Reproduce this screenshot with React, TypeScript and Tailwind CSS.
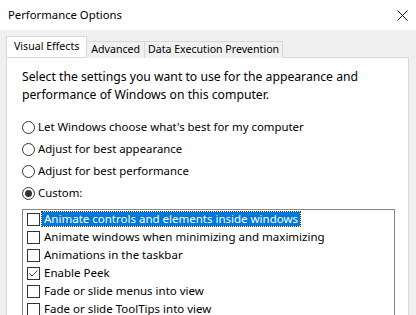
import { useState } from 'react';

const radios = [
  "Let Windows choose what's best for my computer",
  'Adjust for best appearance',
  'Adjust for best performance',
  'Custom:',
];

const effects = [
  { label: 'Animate controls and elements inside windows', checked: false },
  { label: 'Animate windows when minimizing and maximizing', checked: false },
  { label: 'Animations in the taskbar', checked: false },
  { label: 'Enable Peek', checked: true },
  { label: 'Fade or slide menus into view', checked: false },
  { label: 'Fade or slide ToolTips into view', checked: false },
];

function Radio({ on }: { on: boolean }) {
  return (
    <span className="w-[13px] h-[13px] rounded-full border border-[#333] bg-white flex items-center justify-center shrink-0">
      {on && <span className="w-[7px] h-[7px] rounded-full bg-[#333]" />}
    </span>
  );
}

function Checkbox({ checked }: { checked: boolean }) {
  return (
    <span className="w-[13px] h-[13px] border border-[#333] bg-white flex items-center justify-center shrink-0">
      {checked && (
        <svg width="11" height="11" viewBox="0 0 11 11" fill="none">
          <path d="M1.5 5.5 L4 8 L9.5 2.5" stroke="#444" strokeWidth="1" />
        </svg>
      )}
    </span>
  );
}

export default function App() {
  const [choice] = useState(3);
  const [selected] = useState(0);

  return (
    <div className="w-[416px] h-[315px] overflow-hidden flex flex-col bg-[#f0f0f0] text-[12px] text-black font-['Noto_Sans',sans-serif]">
      <div className="h-[30px] bg-white flex items-center justify-between pl-[8px] pr-[8px] shrink-0">
        <span className="text-[11.3px]">Performance Options</span>
        <svg width="11" height="11" viewBox="0 0 11 11" fill="none">
          <path d="M0.5 0.5 L10.5 10.5 M10.5 0.5 L0.5 10.5" stroke="#111" strokeWidth="1" />
        </svg>
      </div>

      <div className="flex-1 pt-[7px] pl-[6px] pr-[7px]">
        <div className="flex items-end h-[20px] relative z-10 text-[10.6px]">
          <div className="h-[21px] bg-white border border-b-0 border-[#d9d9d9] px-[7px] flex items-center">
            Visual Effects
          </div>
          <div className="h-[17px] -mb-px bg-[#f0f0f0] border border-l-0 border-b-0 border-[#d9d9d9] px-[4px] flex items-center">
            Advanced
          </div>
          <div className="h-[17px] -mb-px bg-[#f0f0f0] border border-l-0 border-b-0 border-[#d9d9d9] px-[3px] flex items-center">
            Data Execution Prevention
          </div>
        </div>

        <div className="bg-white border border-[#d9d9d9] h-[300px] pt-[10px] pl-[15px] pr-[13px]">
          <p className="leading-[18px] text-[12.2px]">
            Select the settings you want to use for the appearance and
            <br />
            performance of Windows on this computer.
          </p>

          <div className="mt-[12px] flex flex-col text-[11.4px]">
            {radios.map((r, i) => (
              <div key={r} className="h-[22px] flex items-center gap-[3px]">
                <Radio on={i === choice} />
                <span>{r}</span>
              </div>
            ))}
          </div>

          <div className="mt-[5px] border border-[#828790] flex flex-col pl-[4px] text-[11.5px]">
            {effects.map((e, i) => (
              <div key={e.label} className="h-[18px] flex items-center gap-[2px]">
                <Checkbox checked={e.checked} />
                <span
                  className={
                    i === selected
                      ? 'bg-[#0078d7] text-white px-[2px] leading-[14px] outline-1 outline-dotted outline-[#333]'
                      : 'px-[2px] leading-[14px]'
                  }
                >
                  {e.label}
                </span>
              </div>
            ))}
          </div>
        </div>
      </div>
    </div>
  );
}
